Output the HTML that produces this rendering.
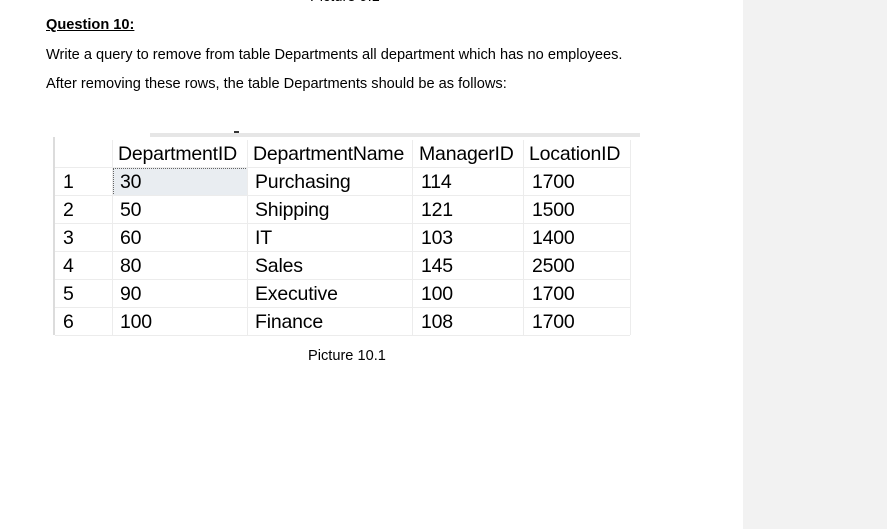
<!DOCTYPE html>
<html><head><meta charset="utf-8"><style>
body{margin:0;width:887px;height:529px;background:#fff;position:relative;overflow:hidden;font-family:"Liberation Sans",Arial,sans-serif;color:#000}
.side{position:absolute;left:743px;top:0;width:144px;height:529px;background:#f2f2f2}
.t{position:absolute;font-size:14.6px;white-space:nowrap}
.cell{position:absolute;font-size:19.5px;line-height:28px;white-space:nowrap;letter-spacing:-0.2px}
.vl{position:absolute;width:1px;background:#ececec;top:140px;height:195px}
.hl{position:absolute;height:1px;background:#ececec;left:55px;width:575px}
</style></head><body>
<div class="side"></div>
<div class="t" style="left:310px;top:-11px">Picture 9.1</div>
<div class="t" style="left:46px;top:17px;font-weight:bold;text-decoration:underline">Question 10:</div>
<div class="t" style="left:46px;top:47px">Write a query to remove from table Departments all department which has no employees.</div>
<div class="t" style="left:46px;top:76px">After removing these rows, the table Departments should be as follows:</div>

<div style="position:absolute;left:150px;top:133px;width:490px;height:4px;background:#e6e6e6"></div>
<div style="position:absolute;left:234px;top:131px;width:5px;height:2px;background:#333"></div>
<div style="position:absolute;left:53px;top:137px;width:2px;height:198px;background:#dcdcdc"></div>
<div style="position:absolute;left:113px;top:168px;width:133px;height:26px;background:#e9edf1;border:1px dotted #666"></div>

<div class="vl" style="left:112px"></div>
<div class="vl" style="left:247px"></div>
<div class="vl" style="left:412px"></div>
<div class="vl" style="left:523px"></div>
<div class="vl" style="left:630px"></div>
<div class="hl" style="top:167px"></div>
<div class="hl" style="top:195px"></div>
<div class="hl" style="top:223px"></div>
<div class="hl" style="top:251px"></div>
<div class="hl" style="top:279px"></div>
<div class="hl" style="top:307px"></div>
<div class="hl" style="top:335px"></div>

<div class="cell" style="left:118px;top:140px">DepartmentID</div>
<div class="cell" style="left:253px;top:140px">DepartmentName</div>
<div class="cell" style="left:419px;top:140px">ManagerID</div>
<div class="cell" style="left:529px;top:140px">LocationID</div>

<div class="cell" style="left:63px;top:168px">1</div><div class="cell" style="left:120px;top:168px">30</div><div class="cell" style="left:255px;top:168px">Purchasing</div><div class="cell" style="left:421px;top:168px">114</div><div class="cell" style="left:532px;top:168px">1700</div>
<div class="cell" style="left:63px;top:196px">2</div><div class="cell" style="left:120px;top:196px">50</div><div class="cell" style="left:255px;top:196px">Shipping</div><div class="cell" style="left:421px;top:196px">121</div><div class="cell" style="left:532px;top:196px">1500</div>
<div class="cell" style="left:63px;top:224px">3</div><div class="cell" style="left:120px;top:224px">60</div><div class="cell" style="left:255px;top:224px">IT</div><div class="cell" style="left:421px;top:224px">103</div><div class="cell" style="left:532px;top:224px">1400</div>
<div class="cell" style="left:63px;top:252px">4</div><div class="cell" style="left:120px;top:252px">80</div><div class="cell" style="left:255px;top:252px">Sales</div><div class="cell" style="left:421px;top:252px">145</div><div class="cell" style="left:532px;top:252px">2500</div>
<div class="cell" style="left:63px;top:280px">5</div><div class="cell" style="left:120px;top:280px">90</div><div class="cell" style="left:255px;top:280px">Executive</div><div class="cell" style="left:421px;top:280px">100</div><div class="cell" style="left:532px;top:280px">1700</div>
<div class="cell" style="left:63px;top:308px">6</div><div class="cell" style="left:120px;top:308px">100</div><div class="cell" style="left:255px;top:308px">Finance</div><div class="cell" style="left:421px;top:308px">108</div><div class="cell" style="left:532px;top:308px">1700</div>

<div class="t" style="left:308px;top:348px">Picture 10.1</div>
</body></html>
